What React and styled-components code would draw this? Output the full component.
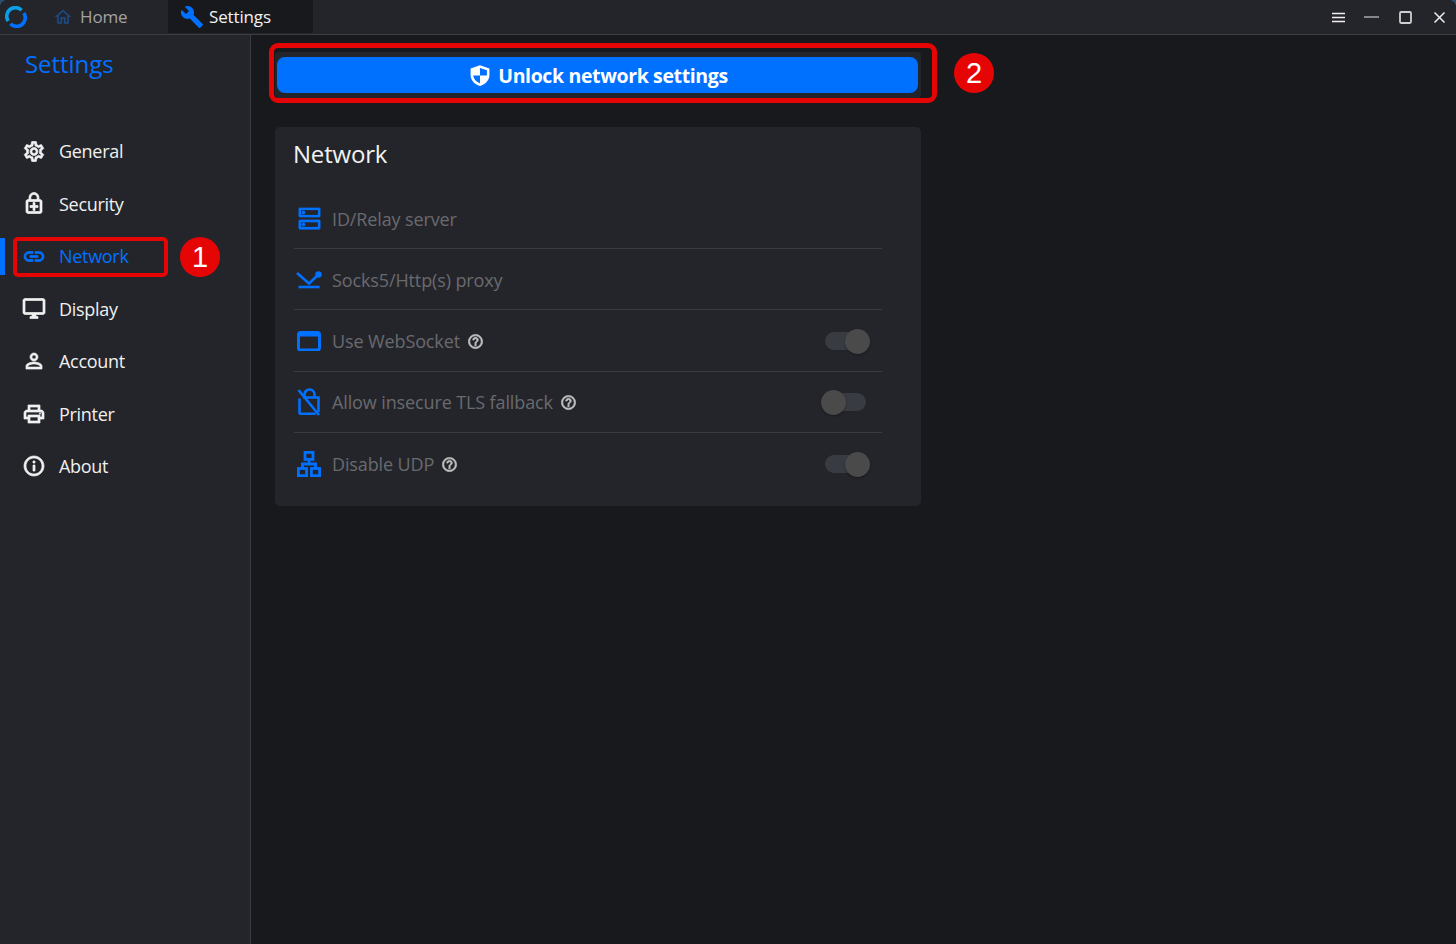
import React from "react";
import styled, { createGlobalStyle } from "styled-components";
import {
  MdOutlineEnhancedEncryption, MdLink, MdOutlineDesktopWindows, MdOutlinePersonOutline,
  MdOutlinePrint, MdInfoOutline, MdBuild, MdOutlineHome, MdOutlineDns, MdHelpOutline, MdOutlineSettings,
} from "react-icons/md";

const Global = createGlobalStyle`
  html, body { margin: 0; padding: 0; height: 100%; background: #2c4d6b; }
  body { font-family: "Open Sans", "Noto Sans", sans-serif; overflow: hidden; }
`;

const Windowed = styled.div`
  width: 1456px; height: 944px; display: flex; flex-direction: column;
  background: #18191d; border-radius: 8px 8px 0 0; overflow: hidden; position: relative;
`;
const TitleBar = styled.header`
  height: 34px; flex: none; display: flex; align-items: stretch; background: #24252b;
  border-bottom: 1px solid #3c3d43;
`;
const LogoBox = styled.div`
  width: 35px; flex: none; display: flex; align-items: center; padding-left: 5px; box-sizing: border-box;
`;
const Tab = styled.div`
  display: flex; align-items: center; box-sizing: border-box; width: ${p => p.$w}px; padding-left: ${p => p.$pad}px;
  gap: ${p => p.$gap}px; font-size: 17px; letter-spacing: -0.15px;
  color: ${p => (p.$active ? "#f2f2f2" : "#a3a3a3")};
  background: ${p => (p.$active ? "#18191d" : "transparent")};
  margin-bottom: 1px;
  svg { flex: none; }
`;
const WinControls = styled.div`
  margin-left: auto; display: flex; align-items: center;
`;
const WinButton = styled.div`
  width: 33.7px; height: 34px; display: flex; align-items: center; justify-content: center;
`;
const Body = styled.div` flex: 1; display: flex; min-height: 0; `;
const Sidebar = styled.aside`
  width: 251px; flex: none; box-sizing: border-box; background: #24252b; border-right: 1px solid #3a3b41;
  display: flex; flex-direction: column;
`;
const SideTitle = styled.div`
  height: 56px; margin-left: 25px; display: flex; align-items: center; font-size: 24px; letter-spacing: -0.05px; color: #0071ff;
`;
const Nav = styled.nav` margin-top: 34px; display: flex; flex-direction: column; `;
const NavItem = styled.div`
  position: relative; height: 52.5px; display: flex; align-items: center; padding-left: 22px; gap: 13px;
  font-size: 18px; letter-spacing: -0.3px; color: ${p => (p.$active ? "#0071ff" : "#f0f0f0")};
`;
const ActiveBar = styled.span`
  position: absolute; left: 0; top: 8px; width: 5px; height: 37px; background: #0071ff;
`;
const IconSlot = styled.span`
  width: 24px; height: 24px; flex: none; display: flex; align-items: center; justify-content: center;
  svg path:not([fill="none"]) { stroke: currentColor; stroke-width: 0.7px; }
`;
const Marker = styled.span`
  position: absolute; box-sizing: border-box; border: ${p => p.$b || 4}px solid #e60505; border-radius: ${p => p.$r}px; pointer-events: none;
`;
const NavMarker = styled(Marker)` left: 13px; top: 7px; width: 155px; height: 40px; `;
const Badge = styled.span`
  position: absolute; width: 40px; height: 40px; border-radius: 50%; background: #e60505; color: #fff;
  display: flex; align-items: center; justify-content: center;
  font-family: "Liberation Sans", sans-serif; font-size: 29px;
`;
const NavBadge = styled(Badge)` left: 180px; top: 7px; `;
const Main = styled.main`
  flex: 1; padding: 17px 0 0 24px; display: flex; flex-direction: column; gap: 29px; align-items: flex-start;
`;
const UnlockWrap = styled.div`
  position: relative; width: 646px; height: 46px; box-sizing: border-box; padding: 5px 3px 4px 2px; background: #24252b; border-radius: 4px;
`;
const UnlockButton = styled.button`
  width: 100%; height: 36px; border: 0; border-radius: 8px; background: #0071ff; color: #fff;
  display: flex; align-items: center; justify-content: center; gap: 7px;
  font-family: inherit; font-weight: 700; font-size: 19.5px; letter-spacing: -0.37px; padding: 0 0 0 2px;
`;
const UnlockMarker = styled(Marker)` left: -6px; top: -9px; width: 668px; height: 60px; `;
const UnlockBadge = styled(Badge)` left: 679px; top: 1px; `;
const Card = styled.section`
  width: 646px; height: 379px; box-sizing: border-box; background: #24252b; border-radius: 5px; padding: 0 39px 0 19px;
`;
const CardTitle = styled.h2`
  margin: 0 0 0 -1px; height: 60.95px; padding-bottom: 8px; box-sizing: border-box; display: flex; align-items: center;
  font-size: 24px; font-weight: 400; letter-spacing: -0.2px; color: #f2f2f2;
`;
const Row = styled.div`
  height: 61.25px; box-sizing: border-box; padding-top: 1px; display: flex; align-items: center; gap: 8px;
  border-bottom: ${p => (p.$last ? "none" : "1px solid #3a3b40")};
  font-size: 18px; letter-spacing: -0.12px; color: #696a6e;
`;
const RowIcon = styled.span`
  width: 30px; height: 30px; flex: none; display: flex; align-items: center; justify-content: center;
`;
const DnsIcon = styled(MdOutlineDns)`
  color: #0071ff;
  path:not([fill="none"]) { stroke: currentColor; stroke-width: 0.15px; }
`;
const Help = styled.span`
  display: flex; margin-left: -1px; color: #c4c4c4;
  svg path:not([fill="none"]) { stroke: currentColor; stroke-width: 0.9px; }
`;
const Track = styled.span`
  margin-left: auto; margin-right: 16px; position: relative; width: 41.5px; height: 18px; border-radius: 9px; background: #393b42;
`;
const Thumb = styled.span`
  position: absolute; top: -3.5px; left: ${p => (p.$on ? "20px" : "-3.5px")}; width: 25px; height: 25px; border-radius: 50%;
  background: #4a4a4a; box-shadow: 0 1px 2px rgba(0,0,0,.35);
`;

const Logo = () => (
  <svg width="22" height="22" viewBox="0 0 22 22" fill="none" strokeWidth="3.6" strokeLinecap="butt">
    <path d="M3.2 15 A8.6 8.6 0 0 1 16.5 4.2" stroke="#0a9fe8" />
    <path d="M18.8 7 A8.6 8.6 0 0 1 5.5 17.8" stroke="#0071ff" />
  </svg>
);
const Shield = () => (
  <svg width="22" height="23" viewBox="0 0 22 22">
    <path fillRule="evenodd" fill="#fff" d="M11 .8 L20.4 4 V10.5 C20.4 15.8 16.6 19.8 11 21.4 C5.4 19.8 1.6 15.8 1.6 10.5 V4 Z M11 3.4 V11 H4.2 C4.6 14.6 7.2 17.4 11 18.8 V11 H17.8 C17.9 10.5 17.9 10.2 17.9 9.8 V5.8 Z" />
  </svg>
);
const Proxy = () => (
  <svg width="26" height="20" viewBox="0 0 26 20" fill="none" stroke="#0071ff" strokeWidth="2.6">
    <path d="M1 3 L13 13.5 L21 6" />
    <circle cx="22.5" cy="4.5" r="3.2" fill="#0071ff" stroke="none" />
    <path d="M2.5 17 H23.5" />
  </svg>
);
const WindowIcon = () => (
  <svg width="24" height="20" viewBox="0 0 24 20" fill="none">
    <rect x="1.5" y="1.5" width="21" height="17.5" rx="2" stroke="#0071ff" strokeWidth="3" />
    <rect x="1" y="1" width="22" height="4.5" fill="#0071ff" />
  </svg>
);
const LockOff = () => (
  <svg width="24" height="28" viewBox="0 0 24 28" fill="none" stroke="#0071ff" strokeWidth="2.6">
    <path d="M1.5 2 L22 27" />
    <path d="M6 9.5 H21.5 V24 M18.5 25.8 H3.5 A1 1 0 0 1 2.5 24.8 V10.5" />
    <path d="M7.5 9 V6.5 A5 5 0 0 1 17.5 6.5 V9" />
  </svg>
);
const Tree = () => (
  <svg width="24" height="26" viewBox="0 0 24 26" fill="none" stroke="#0071ff" strokeWidth="2.8">
    <rect x="8" y="1.4" width="8" height="7" />
    <rect x="1.4" y="17.5" width="8.2" height="7.2" />
    <rect x="14.4" y="17.5" width="8.2" height="7.2" />
    <path d="M12 8 V13 M5.5 17.5 V13 H18.5 V17.5" />
  </svg>
);
const MenuGlyph = () => (
  <svg width="13" height="11" viewBox="0 0 13 11" stroke="#f0f0f0" strokeWidth="1.4"><path d="M0 1.5H13M0 5.5H13M0 9.5H13" /></svg>
);
const MinGlyph = () => (
  <svg width="15" height="2" viewBox="0 0 15 2" stroke="#e8e8e8" strokeWidth="1.2"><path d="M0 1H15" /></svg>
);
const MaxGlyph = () => (
  <svg width="13" height="13" viewBox="0 0 13 13" fill="none" stroke="#cfcfcf" strokeWidth="1.8"><rect x="1" y="1" width="11" height="11" rx="1.2" /></svg>
);
const CloseGlyph = () => (
  <svg width="11" height="11" viewBox="0 0 11 11" stroke="#eee" strokeWidth="1.5"><path d="M.5.5L10.5 10.5M10.5.5L.5 10.5" /></svg>
);

const navItems = [
  ["General", <MdOutlineSettings size={25} />],
  ["Security", <MdOutlineEnhancedEncryption size={25} />],
  ["Network", <MdLink size={25} />, true],
  ["Display", <MdOutlineDesktopWindows size={27} />],
  ["Account", <MdOutlinePersonOutline size={26} />],
  ["Printer", <MdOutlinePrint size={26} />],
  ["About", <MdInfoOutline size={26} />],
];

const rows = [
  { label: "ID/Relay server", icon: <DnsIcon size={29} /> },
  { label: "Socks5/Http(s) proxy", icon: <Proxy /> },
  { label: "Use WebSocket", icon: <WindowIcon />, help: true, on: true },
  { label: "Allow insecure TLS fallback", icon: <LockOff />, help: true, on: false },
  { label: "Disable UDP", icon: <Tree />, help: true, on: true },
];

export default function App() {
  return (
    <>
      <Global />
      <Windowed>
        <TitleBar>
          <LogoBox><Logo /></LogoBox>
          <Tab $w={133} $pad={18} $gap={7}><MdOutlineHome size={20} color="#1d4a83" />Home</Tab>
          <Tab $w={145} $pad={12} $gap={5} $active><MdBuild size={24} color="#0071ff" />Settings</Tab>
          <WinControls>
            <WinButton><MenuGlyph /></WinButton>
            <WinButton><MinGlyph /></WinButton>
            <WinButton><MaxGlyph /></WinButton>
            <WinButton><CloseGlyph /></WinButton>
          </WinControls>
        </TitleBar>
        <Body>
          <Sidebar>
            <SideTitle>Settings</SideTitle>
            <Nav>
              {navItems.map(([label, icon, active]) => (
                <NavItem key={label} $active={active}>
                  {active && <ActiveBar />}
                  <IconSlot>{icon}</IconSlot>
                  {label}
                  {active && <NavMarker $r={5} />}
                  {active && <NavBadge>1</NavBadge>}
                </NavItem>
              ))}
            </Nav>
          </Sidebar>
          <Main>
            <UnlockWrap>
              <UnlockButton><Shield />Unlock network settings</UnlockButton>
              <UnlockMarker $b={5} $r={9} />
              <UnlockBadge>2</UnlockBadge>
            </UnlockWrap>
            <Card>
              <CardTitle>Network</CardTitle>
              {rows.map((r, i) => (
                <Row key={r.label} $last={i === rows.length - 1}>
                  <RowIcon>{r.icon}</RowIcon>
                  {r.label}
                  {r.help && <Help><MdHelpOutline size={17} /></Help>}
                  {r.on !== undefined && <Track><Thumb $on={r.on} /></Track>}
                </Row>
              ))}
            </Card>
          </Main>
        </Body>
      </Windowed>
    </>
  );
}
